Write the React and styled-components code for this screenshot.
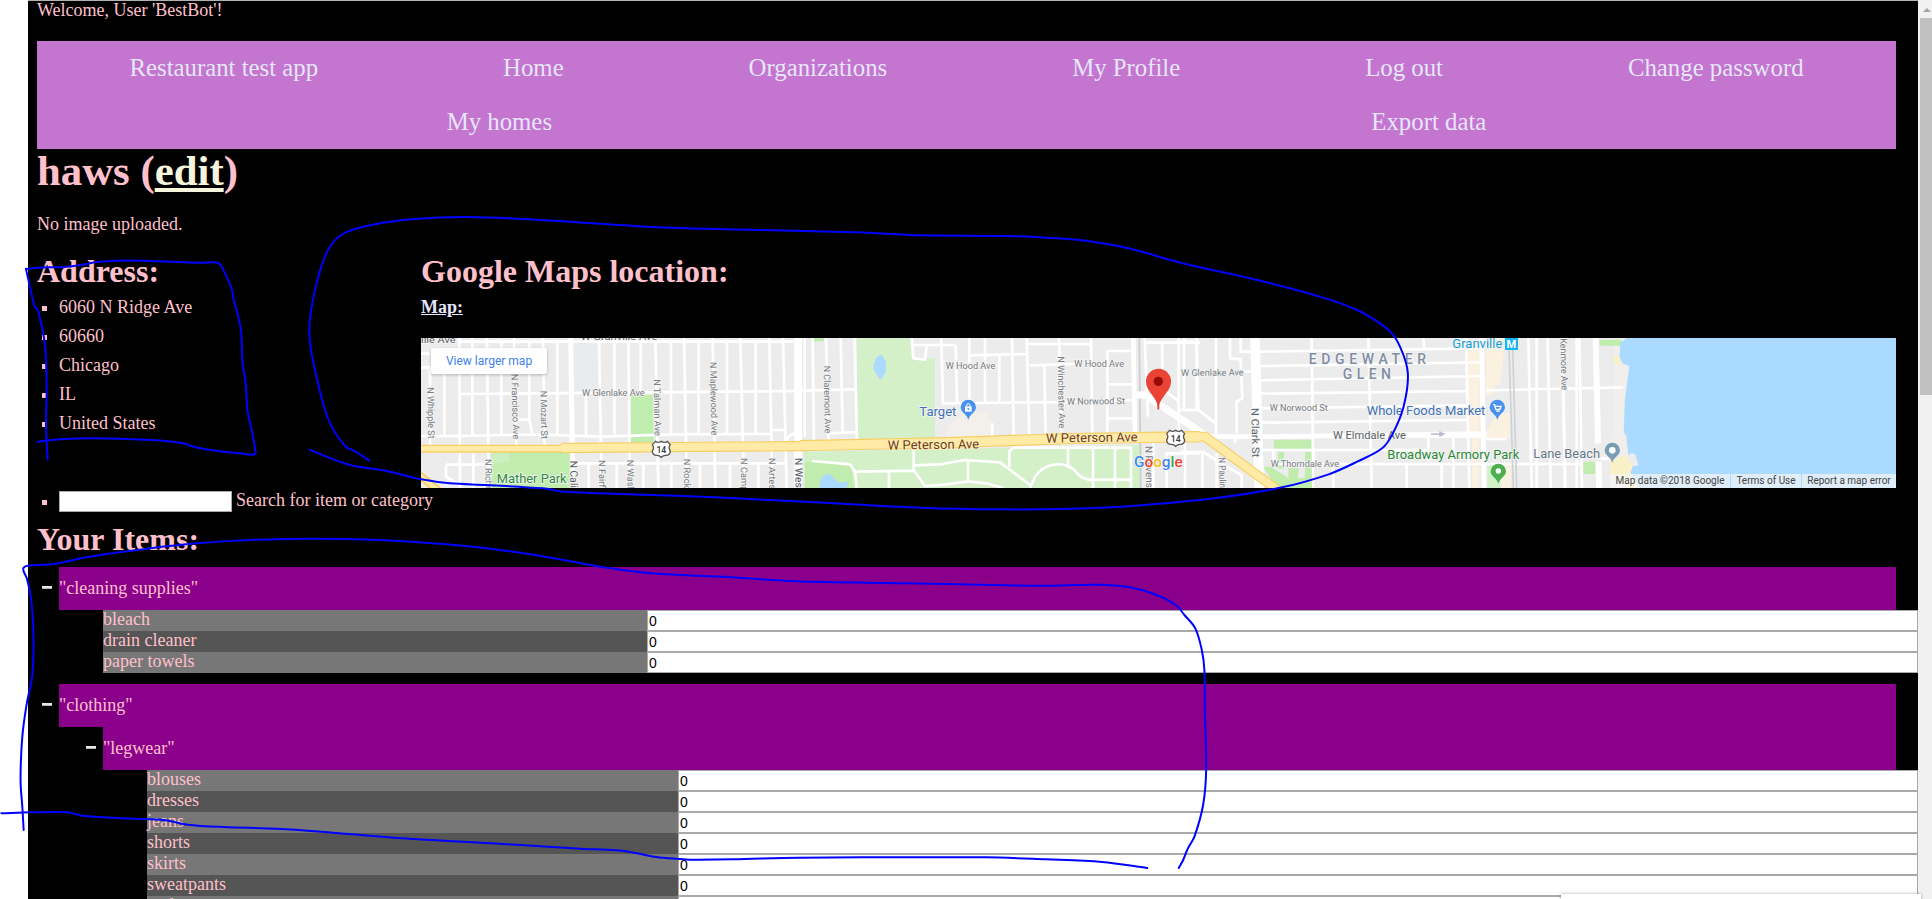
import React from "react";
import styled, { createGlobalStyle } from "styled-components";

const GlobalStyle = createGlobalStyle`
  html, body { margin: 0; padding: 0; background: #fff; overflow: hidden; }
  * { box-sizing: border-box; }
`;

const Window = styled.div`
  position: relative;
  display: flex;
  width: 1932px;
  height: 899px;
  padding-left: 28px;
  overflow: hidden;
  background: #fff;
  font: 18px/20px "Liberation Serif", "Times New Roman", serif;
  color: pink;
`;

const Page = styled.main`
  width: 1890px;
  height: 899px;
  flex: none;
  overflow: hidden;
  background: #000;
  border-top: 1px solid #b2b2b2;
  padding: 0 22px 0 9px;
`;

const Welcome = styled.div`
  height: 40px;
  line-height: 18px;
`;

const Nav = styled.nav`
  display: flex;
  flex-wrap: wrap;
  justify-content: space-around;
  background: #c375cf;
`;

const NavLink = styled.a`
  padding: 0 80px;
  font-size: 24.8px;
  line-height: 54px;
  color: lavender;
`;

const Title = styled.h1`
  margin: 0;
  font-size: 42.8px;
  line-height: 44px;
`;

const EditLink = styled.a`
  color: beige;
  text-decoration: underline;
`;

const Note = styled.p`
  margin: 21px 0 20px;
`;

const Columns = styled.section`
  display: grid;
  grid-template-columns: 384px 1fr;
  height: 234px;
`;

const Heading = styled.h2`
  margin: 0;
  font-size: 32px;
  line-height: 35px;
`;

const BulletList = styled.ul`
  list-style: none;
  margin: 0;
  padding: ${(p) => p.$top}px 0 0;
`;

const BulletItem = styled.li`
  display: flex;
  align-items: center;
  height: ${(p) => p.$height || 29}px;
  line-height: ${(p) => (p.$height ? p.$height - 2 : 29)}px;
  padding-left: 5px;
  &::before {
    content: "";
    width: 5px;
    height: 5px;
    margin: 1px 12px 0 0;
    background: pink;
  }
`;

const MapLink = styled.a`
  display: block;
  margin: 8px 0 21px;
  font-weight: bold;
  color: lavender;
  text-decoration: underline;
`;

const MapFrame = styled.div`
  position: relative;
  height: 150px;
  overflow: hidden;
  background: #ececec;
`;

const MapDrawing = styled.svg`
  display: block;
  font-family: Roboto, sans-serif;
`;

const LargerMap = styled.a`
  position: absolute;
  left: 10px;
  top: 10px;
  width: 116px;
  height: 26px;
  border-radius: 2px;
  background: #fff;
  box-shadow: 0 1px 3px rgba(0, 0, 0, 0.25);
  color: #427fed;
  font: 12px/26px Roboto, sans-serif;
  text-align: center;
`;

const MapCredits = styled.div`
  position: absolute;
  right: 0;
  bottom: 0;
  display: flex;
  height: 14px;
  background: rgba(245, 245, 245, 0.7);
  color: #444;
  font: 10px/14px Roboto, sans-serif;
`;

const Credit = styled.span`
  width: ${(p) => p.$width}px;
  text-align: center;
  white-space: nowrap;
  & + & { border-left: 1px solid #aadaff; }
`;

const SearchBox = styled.input`
  width: 173px;
  height: 21px;
  margin: 0 4px 0 0;
  border: 1px solid #a9a9a9;
  border-radius: 0;
  background: #fff;
`;

const SearchLabel = styled.span`
  padding-bottom: 2px;
`;

const ItemsHeading = styled(Heading)`
  margin: 10px 0;
`;

const Category = styled.section`
  margin: 0 0 ${(p) => (p.$nested ? 0 : 11)}px;
  padding-left: ${(p) => (p.$nested ? 22 : 0)}px;
`;

const CategoryHeader = styled.header`
  display: flex;
  align-items: center;
  height: 43px;
  line-height: 43px;
`;

const Toggle = styled.span`
  width: 10px;
  height: 3px;
  margin: 0 7px 2px 5px;
  background: #e6e6e6;
  border-bottom: 1px solid #b5b5b5;
`;

const CategoryName = styled.span`
  flex: 1;
  background: darkmagenta;
`;

const CategoryBody = styled.div`
  margin-left: 22px;
`;

const ItemTable = styled.div`
  margin: 0 -22px 0 44px;
`;

const ItemRow = styled.label`
  display: grid;
  grid-template-columns: ${(p) => p.$nameWidth}px 1fr;
  height: 21px;
  line-height: 18px;
  background: #555;
  &:nth-child(odd) { background: #777; }
`;

const Quantity = styled.input`
  width: 100%;
  height: 21px;
  margin: 0;
  padding: 0 1px;
  border: 1px solid #a9a9a9;
  border-radius: 0;
  background: #fff;
  color: #000;
  font: 14px "Liberation Sans", Arial, sans-serif;
`;

const Scrollbar = styled.aside`
  flex: 1;
  background: #f1f1f1;
  padding: 0 0 0 2px;
`;

const ScrollArrow = styled.svg`
  display: block;
  height: 18px;
`;

const ScrollThumb = styled.div`
  height: 377px;
  background: #c1c1c1;
`;

const StatusPopup = styled.div`
  position: absolute;
  left: 1561px;
  top: 894px;
  width: 360px;
  height: 20px;
  background: #fff;
  box-shadow: 0 0 3px rgba(0, 0, 0, 0.35);
`;

const InkLayer = styled.svg`
  position: absolute;
  inset: 0;
  pointer-events: none;
  fill: none;
  stroke: #0000ff;
  stroke-width: 2;
  stroke-linecap: round;
  stroke-linejoin: round;
`;

const NAV = ["Restaurant test app", "Home", "Organizations", "My Profile", "Log out", "Change password", "My homes", "Export data"];
const ADDRESS = ["6060 N Ridge Ave", "60660", "Chicago", "IL", "United States"];
const CLEANING = ["bleach", "drain cleaner", "paper towels"];
const LEGWEAR = ["blouses", "dresses", "jeans", "shorts", "skirts", "sweatpants", "underwear"];

const at = (pts, sx, sy, ox, oy) => pts.map(([x, y]) => [x / sx + ox, y / sy + oy]);

// Curve that passes through every sampled point of a pen stroke.
function smooth(pts) {
  let d = `M${pts[0].join(" ")}`;
  for (let i = 0; i < pts.length - 1; i++) {
    const a = pts[Math.max(i - 1, 0)];
    const b = pts[i];
    const c = pts[i + 1];
    const e = pts[Math.min(i + 2, pts.length - 1)];
    const len = Math.hypot(c[0] - b[0], c[1] - b[1]);
    const handle = (p, q) => {
      const l = Math.hypot(q[0] - p[0], q[1] - p[1]) || 1;
      return [((q[0] - p[0]) / l) * (len / 3), ((q[1] - p[1]) / l) * (len / 3)];
    };
    const h1 = handle(a, c);
    const h2 = handle(b, e);
    d += `C${b[0] + h1[0]} ${b[1] + h1[1]} ${c[0] - h2[0]} ${c[1] - h2[1]} ${c[0]} ${c[1]}`;
  }
  return d;
}

const INK = [
  at([[78,57],[113,53],[200,50],[260,42],[290,36],[350,32],[430,32],[600,38],[645,37],[657,40],[665,50],[695,115],[699,140],[722,235],[728,340],[737,400],[743,485],[756,545],[765,595],[764,613],[720,610],[660,604],[580,590],[550,580],[490,572],[440,569],[280,565],[180,568],[113,575]], 3, 3, 0, 250),
  at([[78,57],[104,170],[113,180],[122,215],[133,270],[138,330],[140,420],[138,530],[143,629]], 3, 3, 0, 250),
  at([[97,782],[78,755],[63,738],[40,660],[22,520],[13,400],[20,280],[38,155],[60,102],[100,75],[160,57],[235,51],[330,59],[420,71],[500,82],[560,86],[650,90],[780,97],[870,106],[990,108],[1060,115],[1110,125],[1160,145],[1240,192],[1330,235],[1420,285],[1480,330],[1524,390],[1540,440],[1551,520],[1545,620],[1530,700],[1515,745],[1480,785],[1440,823],[1375,862],[1280,895],[1170,917],[1080,926],[980,928],[870,923],[720,907],[560,890],[370,875],[340,865],[260,855],[210,850],[170,838],[120,812],[70,795],[13,749]], 1.4, 3, 300, 200),
  [
    ...at([[53,1050],[50,980],[46,900],[50,770],[60,670],[72,590],[75,480],[70,360],[60,295],[52,266],[63,257],[120,252],[200,230],[330,206],[440,190],[560,180],[700,176],[850,180],[1000,193],[1120,210],[1250,237]], 2.24, 3, 0, 480),
    ...at([[100,82],[210,100],[410,113],[540,124],[800,130],[1000,135],[1120,137],[1240,134],[1310,141],[1370,162],[1420,195],[1440,225],[1465,265],[1480,330],[1486,390],[1487,500],[1490,690],[1483,795],[1463,890],[1448,925],[1437,960],[1427,984]], 2.306, 3, 560, 540),
  ],
  [
    ...at([[3,1000],[70,997],[150,997],[190,1008],[300,1016],[370,1021],[420,1034],[500,1041],[620,1046],[720,1055],[900,1075],[1100,1090],[1300,1106],[1380,1111],[1420,1118],[1470,1131],[1520,1137]], 2.24, 3, 0, 480),
    ...at([[300,959],[400,958],[550,953],[980,952],[1120,958],[1250,966],[1354,984]], 2.306, 3, 560, 540),
  ],
];

const Roads = ({ d, w = 8, c = "#fff" }) => <path d={d} fill="none" stroke={c} strokeWidth={w} />;

function Label({ x, y, size = 28, color = "#757b80", turn, weight, length, adjust = "spacingAndGlyphs", halo = "#f5f5f5", children }) {
  return (
    <text
      x={x}
      y={y}
      fontSize={size}
      fill={color}
      stroke={halo}
      strokeWidth="5"
      paintOrder="stroke"
      fontWeight={weight}
      textLength={length}
      lengthAdjust={length ? adjust : undefined}
      transform={turn ? `rotate(${turn} ${x} ${y})` : undefined}
    >
      {children}
    </text>
  );
}

const Shield = ({ x, y }) => (
  <g transform={`translate(${x} ${y})`}>
    <path d="M-18 -24Q-9 -18 0 -24Q9 -18 18 -24L27 -14Q20 -5 27 5Q27 18 13 18Q5 18 0 24Q-5 18 -13 18Q-27 18 -27 5Q-20 -5 -27 -14Z" fill="#fff" stroke="#555" strokeWidth="4" />
    <text x="0" y="10" fontSize="26" fontWeight="500" textAnchor="middle" fill="#333">14</text>
  </g>
);

const Pin = ({ x, y, color, children }) => (
  <g transform={`translate(${x} ${y})`}>
    <path d="M0 37C-3 20 -23 15 -23 -1A23 23 0 0 1 23 -1C23 15 3 20 0 37Z" fill={color} />
    {children}
  </g>
);

function WestMap() {
  return (
    <g transform="translate(-11 -18) scale(.33333)">
      <path d="M490 54h75v155h-75z" fill="#e8ecef" />
      <path d="M663 224h68v146h-68zM243 396h237v108H246z" fill="#c0ecae" />
      <path d="M245 396h52v30l-52 6z" fill="#cbefbe" />
      <path d="M1184 390h16v114h-16z" fill="#d3f0c9" />
      <Roads d="M33 101H60M33 142H60V380M103 160V345M148 65H480M148 54L150 504M187 54V345M190 400V430M231 54L236 504M274 65V345M312 54L319 380M358 65V300M399 54L404 380M442 60V345M567 54L575 504M613 60V343M528 228V345M655 54L660 504M692 60V220M736 54L745 504M783 60V340M822 54L831 504M866 60V340M908 54L916 504M951 60V340M991 54L1002 504M1037 60V340M1078 54L1087 504M1119 54L1130 504M1184 54V350M148 222L1200 213M33 348H148L368 343L580 350L780 343L1085 342M320 299H358L368 345M480 65H1150M108 434H240M108 434V470L150 495M500 430H1125M536 430V504M620 430V504M700 430V504M784 430V504M870 430V504M960 430V504M1045 430V504M190 430V504M1087 330H1125M1130 370L1135 350L1156 338" />
      <Roads d="M482 54L489 504" w="15" />
      <Roads d="M1164 54V504" w="24" />
      <Roads d="M33 386H445L465 384L1200 378" w="24" c="#f8cf66" />
      <Roads d="M455 384L1200 378" w="31" c="#f8cf66" />
      <Roads d="M33 386H445L465 384L1200 378" w="16" c="#ffeba5" />
      <Roads d="M455 384L1200 378" w="24" c="#ffeba5" />
      <Roads d="M22 460L85 512" w="24" c="#f8cf66" />
      <Roads d="M22 460L85 512" w="13" c="#ffeba5" />
      <Label x={33} y={68} color="#555d63" length={104}>ille Ave</Label>
      <Label x={512} y={60} color="#555d63" length={230}>W Granville Ave</Label>
      <Label x={516} y={228} length={188}>W Glenlake Ave</Label>
      <Label x={52} y={202} turn={89} length={154}>N Whipple St</Label>
      <Label x={304} y={162} turn={88.5} length={196}>N Francisco Ave</Label>
      <Label x={391} y={212} turn={89} length={145}>N Mozart St</Label>
      <Label x={731} y={178} turn={89} length={170}>N Talman Ave</Label>
      <Label x={900} y={126} turn={89} length={220}>N Maplewood Ave</Label>
      <Label x={225} y={417} turn={89}>N Richmond</Label>
      <Label x={480} y={422} turn={89} size={31} color="#555d63">N California</Label>
      <Label x={566} y={420} turn={89}>N Fairfield</Label>
      <Label x={651} y={419} turn={89}>N Washtenaw</Label>
      <Label x={821} y={416} turn={89}>N Rockwell</Label>
      <Label x={992} y={414} turn={89}>N Campbell</Label>
      <Label x={1076} y={414} turn={89}>N Artesian</Label>
      <Label x={1155} y={414} turn={89} size={31} color="#555d63">N Western</Label>
      <Label x={260} y={489} size={38} color="#2b8a38" length={210}>Mather Park</Label>
      <Shield x={754} y={388} />
    </g>
  );
}

function ParkMap() {
  return (
    <g transform="translate(379 -18) scale(.33333)">
      <path d="M170 54H335V115H405V355L172 362ZM12 395L1025 375V504H12Z" fill="#d3f0c9" />
      <path d="M15 425L150 430L165 504H15ZM42 54h30v10h-30z" fill="#c0ecae" />
      <path d="M245 104L258 125V155L241 180L222 150L220 135L230 112ZM58 504L62 475L85 460L118 488L147 484L140 504Z" fill="#aadaff" />
      <path d="M440 352V320L495 275H565L575 310V352Z" fill="#f3efeb" />
      <Roads d="M0 212L168 208M38 54L42 365M78 54L86 362M122 54L128 340M90 340L168 336M164 54L171 362M335 54L340 115L375 119L380 80M338 75H465M424 54L429 250L780 246L1000 240M467 75L471 250M508 54V245M514 106L680 102M555 54V245M598 106V248M636 54L641 352M680 54L688 352M684 72H875M688 136L830 132M733 138L737 350M777 54L785 344M873 54L877 348M1000 93H922V340M922 193H996M922 295H996M577 310V352M1034 54L1044 290M1086 68L1088 210M1136 54V350M1034 68H1200M1090 210L1136 243M1136 270H1190V54M1100 504V400H1200M1060 365V504M1155 370V504" />
      <Roads d="M36 423L150 433L165 455L170 504M170 455L341 452M341 385V450L375 498L440 493L505 484L560 490L610 504M341 436L420 433L495 420L600 427L690 495M504 420V484M267 456V504M628 440V395L640 383H993V504M690 504L705 470Q730 435 770 433T830 458T900 479H993M804 385V445M879 385V504M945 385V504" w="8" />
      <Roads d="M1000 54L1005 348" w="14" />
      <Roads d="M1018 54L1022 504" w="5" c="#c9ced2" />
      <Roads d="M1005 225H1035L1200 335" w="21" />
      <Roads d="M0 377L440 368L800 356L1200 350" w="34" c="#f8cf66" />
      <Roads d="M0 377L440 368L800 356L1200 350" w="27" c="#ffeba5" />
      <Label x={71} y={137} turn={89} length={203}>N Claremont Ave</Label>
      <Label x={773} y={109} turn={89} length={216}>N Winchester Ave</Label>
      <Label x={437} y={148} length={149}>W Hood Ave</Label>
      <Label x={823} y={140} length={149}>W Hood Ave</Label>
      <Label x={801} y={254} length={174} turn={-0.5}>W Norwood St</Label>
      <Label x={1143} y={168} length={188} turn={-0.5}>W Glenlake Ave</Label>
      <Label x={263} y={389} size={39} color="#6f3d16" halo="#fff0bd" length={275} turn={-0.8}>W Peterson Ave</Label>
      <Label x={738} y={368} size={39} color="#6f3d16" halo="#fff0bd" length={275} turn={-0.8}>W Peterson Ave</Label>
      <Label x={358} y={287} size={38} color="#3f72b8" length={111}>Target</Label>
      <Label x={1036} y={378} turn={89} size={30}>N Ravenswood</Label>
      <Pin x={505} y={263} color="#4a90ee">
        <path d="M-10 -4H10V12H-10Z" fill="#fff" />
        <path d="M-5 -4V-7A5 5 0 0 1 5 -7V-4" fill="none" stroke="#fff" strokeWidth="3" />
        <circle cx="0" cy="4" r="3" fill="#4a90ee" />
      </Pin>
      <path d="M1075 270C1074 230 1038 218 1038 184A37.500 37.500 0 0 1 1113 184C1113 218 1077 230 1075 270Z" fill="#ea4335" />
      <path d="M1075 225V268" stroke="#ea4335" strokeWidth="6" />
      <circle cx="1075" cy="184" r="14" fill="#960a0a" />
      <Shield x={1127} y={355} />
      <text x="1002" y="442" fontSize="46" fontWeight="500" stroke="#fff" strokeWidth="3" paintOrder="stroke" textLength="146">
        <tspan fill="#4285f4">G</tspan><tspan fill="#ea4335">o</tspan><tspan fill="#fbbc05">o</tspan><tspan fill="#4285f4">g</tspan><tspan fill="#34a853">l</tspan><tspan fill="#ea4335">e</tspan>
      </text>
    </g>
  );
}

function EdgewaterMap() {
  return (
    <g transform="translate(759 -18) scale(.33333)">
      <path d="M862 80h36v424h-22V345h-10zM918 54h52v60l-10 80h-20v30h-22zM950 280h40v74h-70v-20zM955 430h38v74h-38z" fill="#faf1e0" />
      <path d="M282 359H396V387H282ZM250 440H272L325 474V443H355V474H375V396H405V504H290ZM294 396h18v50h-18z" fill="#c0ecae" />
      <path d="M922 430h40v74h-40z" fill="#d3f0c9" />
      <Roads d="M0 65H45M12 54V270M50 65L55 270L108 310M108 54V350M0 270H55M150 54V115L182 118L187 235L170 245V340M182 54V95H240M240 95L895 85M240 138L900 127M240 181L900 168M245 221L860 213M245 265L860 256M245 308L860 300M245 350H920M245 390H745M280 432H1200M395 54L400 504M565 54L575 504M730 54L733 88M745 350V425M785 432V504M820 350V504M858 54L868 504M918 211L1200 205M920 357H980M1045 54L1055 504M1070 54V504M1103 54L1112 504M1147 54L1155 504M1190 54V504M280 390V432M0 396H70L140 440L185 465V504M67 400V504M110 400V504M165 350V370M460 432V504M680 432V504M400 390L405 432M190 155H230" />
      <Roads d="M225 54L238 504" w="29" />
      <Roads d="M75 350H220M245 350L920 341" w="14" />
      <Roads d="M905 54L912 504" w="15" />
      <Roads d="M987 80L1000 504M998 80L1010 504" w="5" c="#cdd2d6" />
      <Roads d="M0 295L75 345" w="20" />
      <Roads d="M12 350H75L290 508" w="30" c="#f8cf66" />
      <Roads d="M12 350H75L290 508" w="23" c="#ffeba5" />
      <Label x={214} y={264} size={31} turn={89} color="#5d656b" length={148}>N Clark St</Label>
      <Label x={116} y={412} turn={88} length={92}>N Paulin</Label>
      <Label x={386} y={132} size={42} weight="500" color="#7f8da3" length={352} adjust="spacing">EDGEWATER</Label>
      <Label x={488} y={178} size={42} weight="500" color="#7f8da3" length={145} adjust="spacing">GLEN</Label>
      <Label x={269} y={273} length={174}>W Norwood St</Label>
      <Label x={459} y={356} size={31} color="#5d656b" length={219}>W Elmdale Ave</Label>
      <Label x={272} y={441} length={205}>W Thorndale Ave</Label>
      <Label x={560} y={286} size={38} color="#3f72b8" length={356}>Whole Foods Market</Label>
      <Label x={622} y={416} size={38} color="#2b8a38" length={396}>Broadway Armory Park</Label>
      <Label x={1060} y={415} size={37} color="#66788a" length={200}>Lane Beach</Label>
      <Label x={817} y={85} size={37} color="#169bd7" length={150}>Granville</Label>
      <path d="M975 54h39v36h-39z" fill="#19b5f1" />
      <text x="994" y="84" fontSize="33" fontWeight="700" textAnchor="middle" fill="#fff">M</text>
      <Label x={1140} y={30} turn={88.5} length={181}>N Kenmore Ave</Label>
      <path d="M753 342H785M780 336L792 342L780 348Z" stroke="#b6bccb" strokeWidth="4" fill="#b6bccb" />
      <Pin x={952} y={263} color="#4a90ee">
        <path d="M-13 -9H-8L-5 5H8L11 -4H-6M-3 10H7" fill="none" stroke="#fff" strokeWidth="4" />
      </Pin>
      <Pin x={955} y={455} color="#4caf50"><circle r="8" fill="#fff" cy="-2" /></Pin>
    </g>
  );
}

function LakeMap() {
  return (
    <g transform="translate(1139 -18) scale(.33333)">
      <path d="M163 54H200L208 140L192 240V340L205 410L215 504H150L160 300Z" fill="#f1efed" />
      <path d="M118 59H185V77H118ZM70 425H106V462H70Z" fill="#c0ecae" />
      <path d="M200 54L182 68L178 110L187 130L208 139L195 240L191 338L199 346L205 407L213 400L225 402L235 435L218 438L211 460L240 504H1010V54Z" fill="#aadaff" />
      <path d="M158 108H178L185 136H176L160 122ZM150 425L180 410L215 408L218 435L211 460L235 504L205 504L150 462Z" fill="#f8f0c6" />
      <path d="M203 408L213 400L225 402L235 435L218 438Z" fill="#ececec" />
      <Roads d="M58 54L66 504M10 210L16 504M20 206L190 202M122 416H150" />
      <Roads d="M107 54L114 370M116 425L117 504" w="18" />
      <Pin x={157} y={392} color="#7c9cb4"><circle r="10" fill="#fff" cy="-1" /></Pin>
    </g>
  );
}

const Rows = ({ items, nameWidth }) => (
  <ItemTable>
    {items.map((name) => (
      <ItemRow key={name} $nameWidth={nameWidth}>
        {name}
        <Quantity defaultValue="0" />
      </ItemRow>
    ))}
  </ItemTable>
);

export default function App() {
  return (
    <Window>
      <GlobalStyle />
      <Page>
        <Welcome>Welcome, User 'BestBot'!</Welcome>
        <Nav>{NAV.map((n) => <NavLink key={n}>{n}</NavLink>)}</Nav>
        <Title>haws (<EditLink>edit</EditLink>)</Title>
        <Note>No image uploaded.</Note>
        <Columns>
          <div>
            <Heading>Address:</Heading>
            <BulletList $top={4}>{ADDRESS.map((a) => <BulletItem key={a}>{a}</BulletItem>)}</BulletList>
          </div>
          <div>
            <Heading>Google Maps location:</Heading>
            <MapLink>Map:</MapLink>
            <MapFrame>
              <MapDrawing width="1475" height="150">
                <LakeMap />
                <WestMap />
                <EdgewaterMap />
                <ParkMap />
              </MapDrawing>
              <LargerMap>View larger map</LargerMap>
              <MapCredits>
                <Credit $width={120}>Map data ©2018 Google</Credit>
                <Credit $width={71}>Terms of Use</Credit>
                <Credit $width={95}>Report a map error</Credit>
              </MapCredits>
            </MapFrame>
          </div>
        </Columns>
        <BulletList $top={3}>
          <BulletItem $height={21}><SearchBox /><SearchLabel>Search for item or category</SearchLabel></BulletItem>
        </BulletList>
        <ItemsHeading>Your Items:</ItemsHeading>
        <Category>
          <CategoryHeader><Toggle /><CategoryName>"cleaning supplies"</CategoryName></CategoryHeader>
          <CategoryBody><Rows items={CLEANING} nameWidth={544} /></CategoryBody>
        </Category>
        <Category>
          <CategoryHeader><Toggle /><CategoryName>"clothing"</CategoryName></CategoryHeader>
          <CategoryBody>
            <Category $nested>
              <CategoryHeader><Toggle /><CategoryName>"legwear"</CategoryName></CategoryHeader>
              <CategoryBody><Rows items={LEGWEAR} nameWidth={531} /></CategoryBody>
            </Category>
          </CategoryBody>
        </Category>
      </Page>
      <Scrollbar>
        <ScrollArrow width="12" height="18"><path d="M3 12h8L7 8z" fill="#a3a3a3" /></ScrollArrow>
        <ScrollThumb />
      </Scrollbar>
      <StatusPopup />
      <InkLayer width="1932" height="899">
        {INK.map((pts, i) => <path key={i} d={smooth(pts)} />)}
      </InkLayer>
    </Window>
  );
}
